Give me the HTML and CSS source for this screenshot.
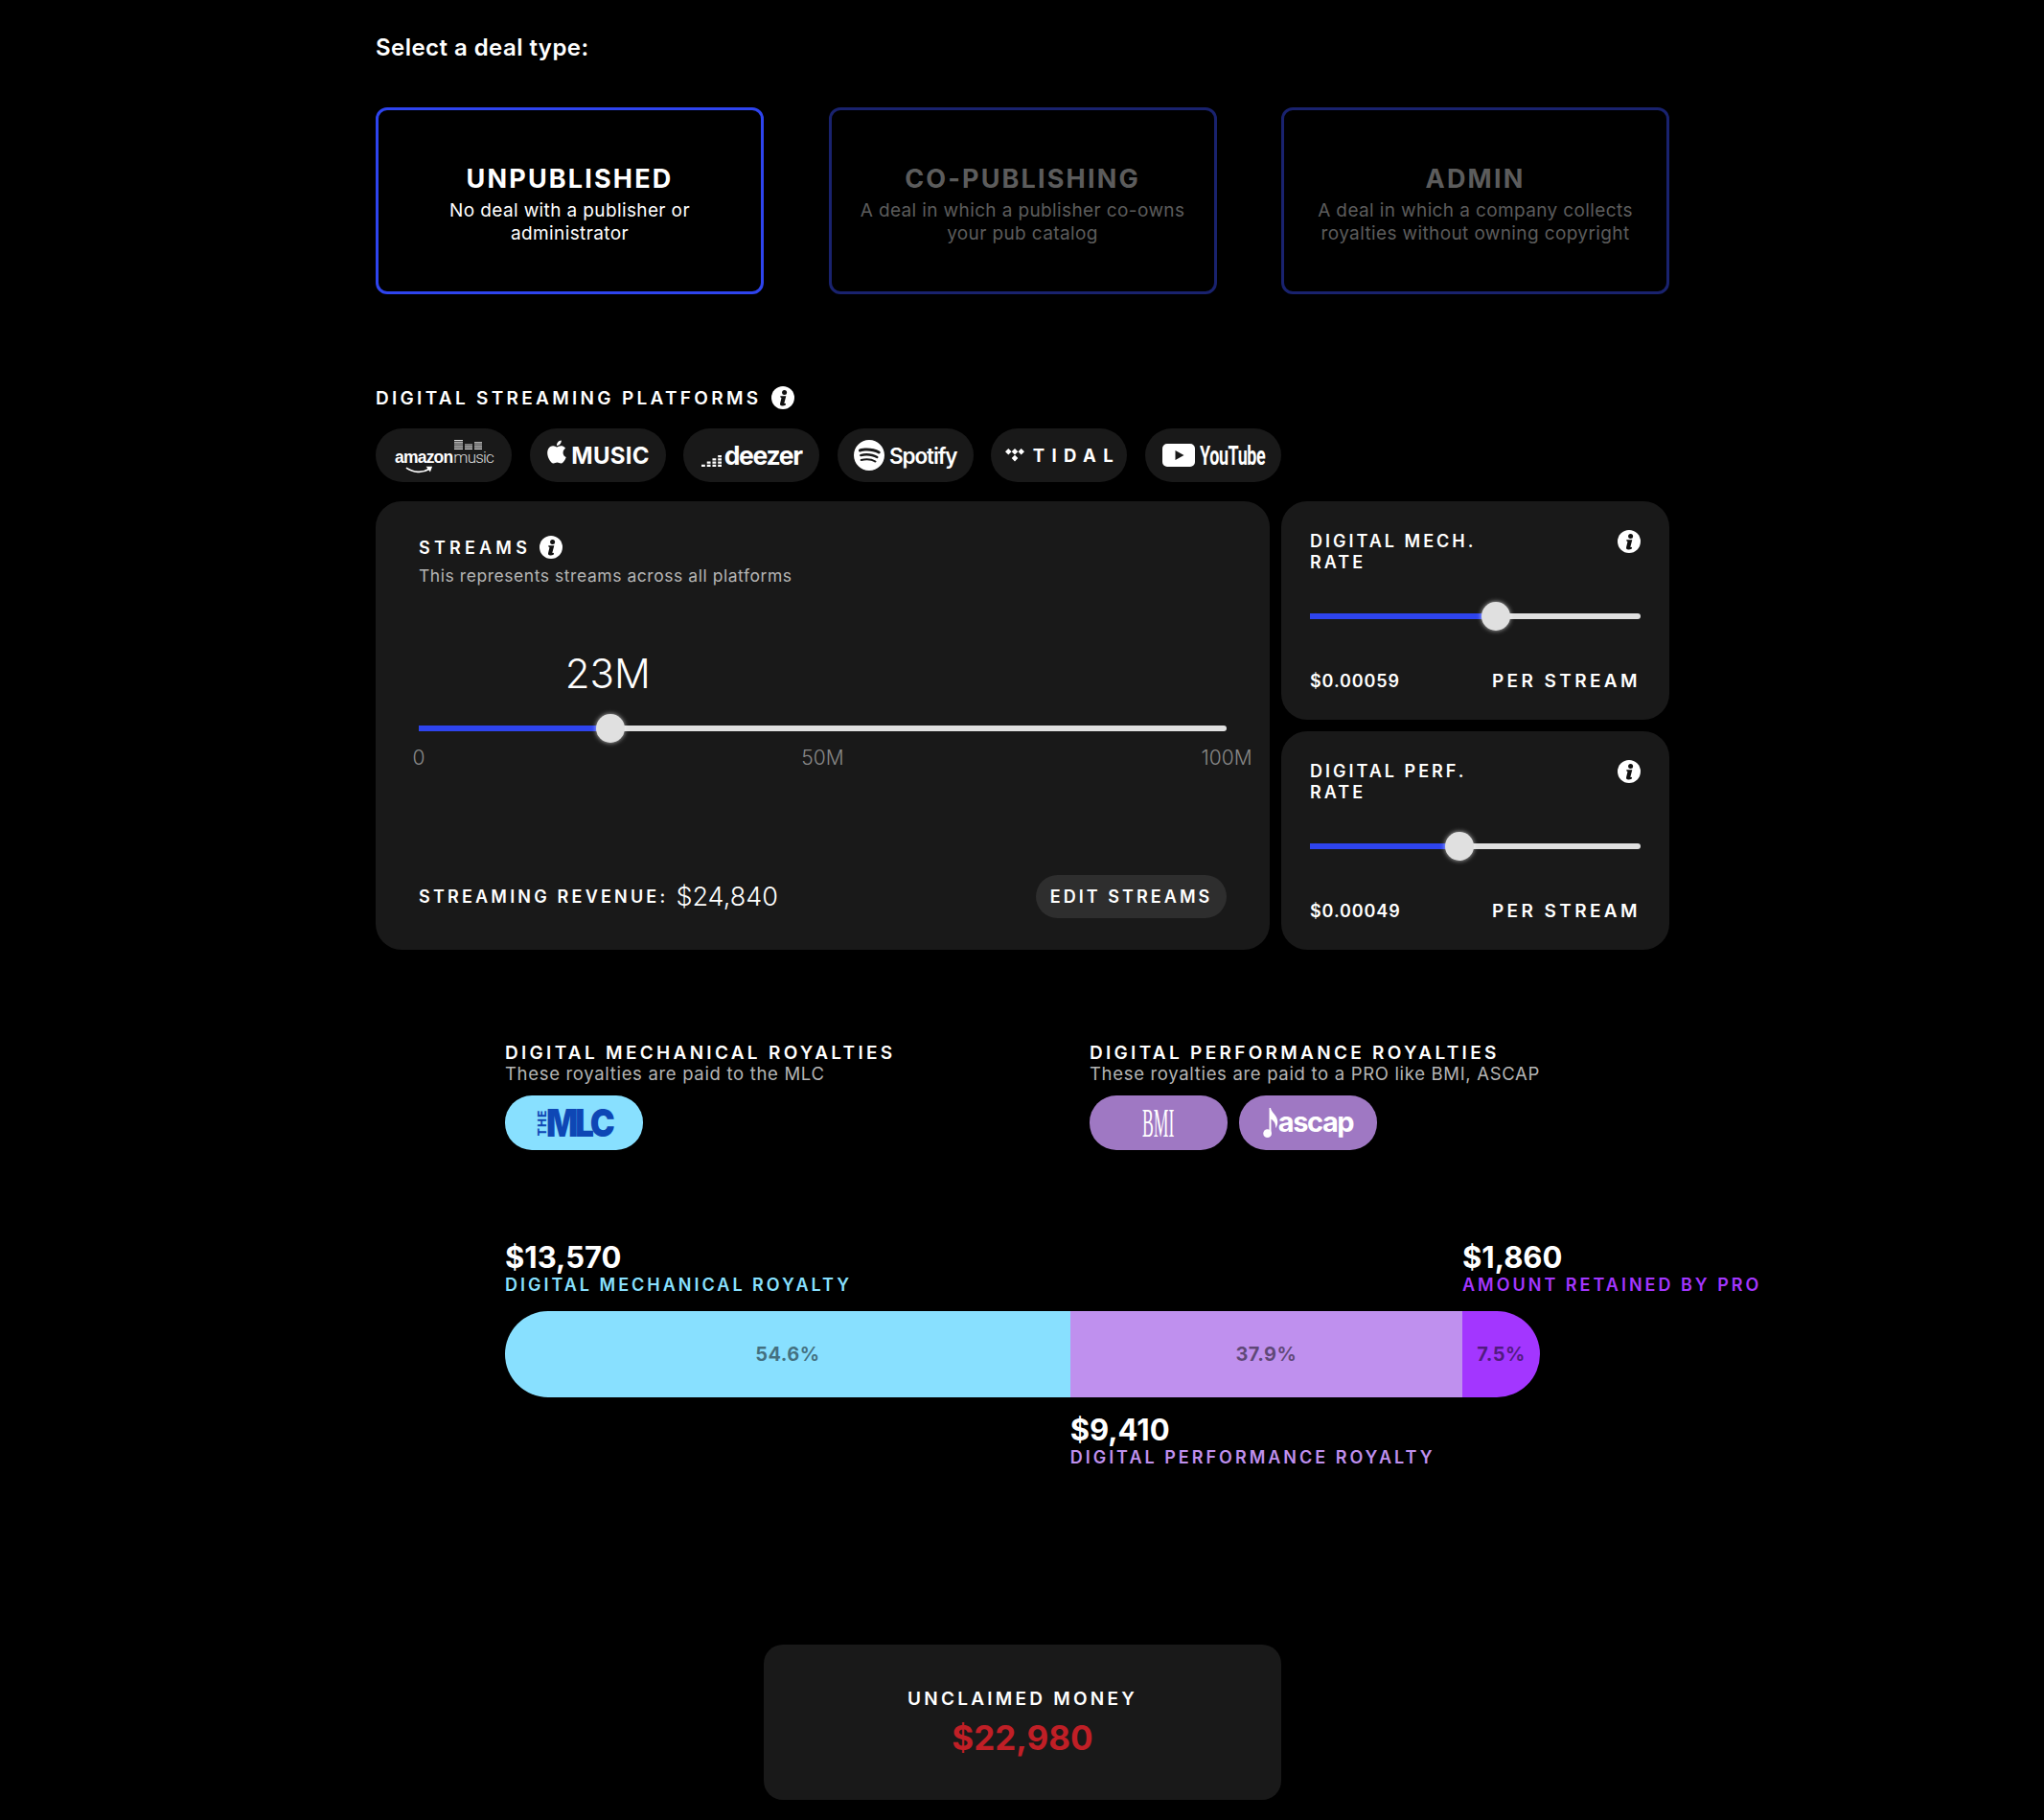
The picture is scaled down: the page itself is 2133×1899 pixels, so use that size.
FILE: index.html
```html
<!DOCTYPE html>
<html>
<head>
    <meta charset="utf-8">
    <title>Royalties</title>
    <link rel="stylesheet" href="styles.css">
</head>
<body>
<svg class="defs">
    <symbol id="info" viewBox="0 0 24 24">
        <circle cx="12" cy="12" r="12" fill="#fff"/>
        <circle cx="13.6" cy="6.4" r="2.5" fill="#111"/>
        <path d="M9.2 10.2h6.1l-1.9 7.3c-.1.5.3.6 1.5.2v1.7c-1 .6-2.3 1-3.5 1-2 0-2.7-1-2.3-2.5l1.3-5.3c.1-.5-.1-.7-.9-.8z" fill="#111"/>
    </symbol>
</svg>

<div class="page">
    <h1 class="heading">Select a deal type:</h1>

    <div class="deals">
        <div class="deal active">
            <div class="deal-name">UNPUBLISHED</div>
            <div class="deal-desc">No deal with a publisher or<br>administrator</div>
        </div>
        <div class="deal">
            <div class="deal-name">CO-PUBLISHING</div>
            <div class="deal-desc">A deal in which a publisher co-owns<br>your pub catalog</div>
        </div>
        <div class="deal">
            <div class="deal-name">ADMIN</div>
            <div class="deal-desc">A deal in which a company collects<br>royalties without owning copyright</div>
        </div>
    </div>

    <div class="section-title">DIGITAL STREAMING PLATFORMS <svg class="info"><use href="#info"/></svg></div>

    <div class="platforms">
        <div class="pill">
            <div class="amazon">
                <svg class="amazon-bars" viewBox="0 0 29 10" fill="#ddd"><path d="M0 0h9v1.2H0zM0 2.2h9v1.2H0zM0 4.4h9v1.2H0zM0 6.6h9v1.2H0zM0 8.8h9V10H0zM11 4.4h8v1.2h-8zM11 6.6h8v1.2h-8zM11 8.8h8V10h-8zM21 2.2h8v1.2h-8zM21 4.4h8v1.2h-8zM21 6.6h8v1.2h-8zM21 8.8h8V10h-8z"/></svg>
                <span class="amazon-word">amazon</span><span class="amazon-music">music</span>
                <svg class="amazon-smile" viewBox="0 0 40 14"><path d="M1 3c10 7 24 8 33 2" fill="none" stroke="#fff" stroke-width="2.4"/><path d="M30 1l9 0-3 8z" fill="#fff"/></svg>
            </div>
        </div>
        <div class="pill">
            <svg class="apple" viewBox="0 0 24 24" fill="#fff"><path d="M12.152 6.896c-.948 0-2.415-1.078-3.96-1.04-2.04.027-3.91 1.183-4.961 3.014-2.117 3.675-.546 9.103 1.519 12.09 1.013 1.454 2.208 3.09 3.792 3.039 1.52-.065 2.09-.987 3.935-.987 1.831 0 2.35.987 3.96.948 1.637-.026 2.676-1.48 3.676-2.948 1.156-1.688 1.636-3.325 1.662-3.415-.039-.013-3.182-1.221-3.22-4.857-.026-3.04 2.48-4.494 2.597-4.559-1.429-2.09-3.623-2.324-4.39-2.376-2-.156-3.675 1.09-4.61 1.09zM15.53 3.83c.843-1.012 1.4-2.427 1.245-3.83-1.207.052-2.662.805-3.532 1.818-.78.896-1.454 2.338-1.273 3.714 1.338.104 2.715-.688 3.559-1.701"/></svg>
            <span class="apple-word">MUSIC</span>
        </div>
        <div class="pill">
            <svg class="deezer-bars" viewBox="0 0 22 12" preserveAspectRatio="none" fill="#fff"><path d="M0 10h4v2H0zM6 10h4v2H6zM12 10h4v2h-4zM18 10h4v2h-4zM6 7h4v2H6zM12 7h4v2h-4zM18 7h4v2h-4zM12 4h4v2h-4zM18 4h4v2h-4zM18 1h4v2h-4z"/></svg>
            <span class="deezer-word">deezer</span>
        </div>
        <div class="pill">
            <svg class="spotify" viewBox="0 0 24 24" fill="#fff"><path d="M12 0C5.4 0 0 5.4 0 12s5.4 12 12 12 12-5.4 12-12S18.66 0 12 0zm5.521 17.34c-.24.359-.66.48-1.021.24-2.82-1.74-6.36-2.101-10.561-1.141-.418.122-.779-.179-.899-.539-.12-.421.18-.78.54-.9 4.56-1.021 8.52-.6 11.64 1.32.42.18.479.659.301 1.02zm1.44-3.3c-.301.42-.841.6-1.262.3-3.239-1.98-8.159-2.58-11.939-1.38-.479.12-1.02-.12-1.14-.6-.12-.48.12-1.021.6-1.141C9.6 9.9 15 10.561 18.72 12.84c.361.181.54.78.241 1.2zm.12-3.36C15.24 8.4 8.82 8.16 5.16 9.301c-.6.179-1.2-.181-1.38-.721-.18-.601.18-1.2.72-1.381 4.26-1.26 11.28-1.02 15.721 1.621.539.3.719 1.02.419 1.56-.299.421-1.02.599-1.559.3z"/></svg>
            <span class="spotify-word">Spotify</span>
        </div>
        <div class="pill">
            <svg class="tidal" viewBox="0 0 20 14" fill="#fff"><path d="M3.3 0l3.3 3.3-3.3 3.3L0 3.3zM10 0l3.3 3.3L10 6.6 6.7 3.3zM16.7 0L20 3.3l-3.3 3.3-3.3-3.3zM10 6.8l3.3 3.3-3.3 3.3-3.3-3.3z"/></svg>
            <span class="tidal-word">TIDAL</span>
        </div>
        <div class="pill">
            <svg class="youtube" viewBox="0 0 34 24"><path fill="#fff" fill-rule="evenodd" d="M5 0h24a5 5 0 0 1 5 5v14a5 5 0 0 1-5 5H5a5 5 0 0 1-5-5V5a5 5 0 0 1 5-5zM13.5 7v10l9-5z"/></svg>
            <span class="youtube-word">YouTube</span>
        </div>
    </div>

    <div class="panels">
        <div class="panel streams">
            <div class="panel-title">STREAMS <svg class="info"><use href="#info"/></svg></div>
            <div class="panel-sub">This represents streams across all platforms</div>
            <div class="streams-slider">
                <div class="slider">
                    <div class="fill" style="width: 23.7%"></div>
                    <div class="thumb" style="left: 23.7%"></div>
                    <div class="slider-value" style="left: 23.4%">23M</div>
                </div>
                <div class="ticks">
                    <span class="tick">0</span>
                    <span class="tick">50M</span>
                    <span class="tick">100M</span>
                </div>
            </div>
            <div class="revenue-row">
                <div class="revenue"><span class="revenue-label">STREAMING REVENUE:</span> <span class="revenue-value">$24,840</span></div>
                <div class="edit-btn">EDIT STREAMS</div>
            </div>
        </div>
        <div class="rates">
            <div class="panel rate">
                <div class="rate-head">
                    <div class="rate-title">DIGITAL MECH.<br>RATE</div>
                    <svg class="info"><use href="#info"/></svg>
                </div>
                <div class="slider">
                    <div class="fill" style="width: 56.1%"></div>
                    <div class="thumb" style="left: 56.1%"></div>
                </div>
                <div class="rate-foot"><span class="rate-value">$0.00059</span><span class="rate-unit">PER STREAM</span></div>
            </div>
            <div class="panel rate">
                <div class="rate-head">
                    <div class="rate-title">DIGITAL PERF.<br>RATE</div>
                    <svg class="info"><use href="#info"/></svg>
                </div>
                <div class="slider">
                    <div class="fill" style="width: 45.1%"></div>
                    <div class="thumb" style="left: 45.1%"></div>
                </div>
                <div class="rate-foot"><span class="rate-value">$0.00049</span><span class="rate-unit">PER STREAM</span></div>
            </div>
        </div>
    </div>

    <div class="royalties">
        <div class="royalty">
            <div class="royalty-title">DIGITAL MECHANICAL ROYALTIES</div>
            <div class="royalty-sub">These royalties are paid to the MLC</div>
            <div class="royalty-pills">
                <div class="pill pill-blue"><span class="mlc-the">THE</span><span class="mlc-word">MLC</span></div>
            </div>
        </div>
        <div class="royalty">
            <div class="royalty-title">DIGITAL PERFORMANCE ROYALTIES</div>
            <div class="royalty-sub">These royalties are paid to a PRO like BMI, ASCAP</div>
            <div class="royalty-pills">
                <div class="pill pill-purple"><span class="bmi-word">BMI</span></div>
                <div class="pill pill-purple">
                    <svg class="ascap-note" viewBox="0 0 16 32"><ellipse cx="4.5" cy="27.5" rx="4.500" ry="4.500" fill="#fff"/><path fill="#fff" d="M6.500 0h1.500c.5 5 7.500 8 7.500 15 0 3-1 5-2 7 0-5-1.500-8-5-10v16H6.500z"/></svg>
                    <span class="ascap-word">ascap</span>
                </div>
            </div>
        </div>
    </div>

    <div class="chart">
        <div class="legend">
            <div class="legend-item" style="width: 92.5%">
                <div class="legend-value">$13,570</div>
                <div class="legend-label c-blue">DIGITAL MECHANICAL ROYALTY</div>
            </div>
            <div class="legend-item">
                <div class="legend-value">$1,860</div>
                <div class="legend-label c-violet">AMOUNT RETAINED BY PRO</div>
            </div>
        </div>
        <div class="bar">
            <div class="seg seg-blue" style="width: 54.6%">54.6%</div>
            <div class="seg seg-lilac" style="width: 37.9%">37.9%</div>
            <div class="seg seg-violet" style="width: 7.5%">7.5%</div>
        </div>
        <div class="legend legend-below">
            <div class="legend-item" style="margin-left: 54.6%">
                <div class="legend-value">$9,410</div>
                <div class="legend-label c-lilac">DIGITAL PERFORMANCE ROYALTY</div>
            </div>
        </div>
    </div>

    <div class="unclaimed">
        <div class="unclaimed-label">UNCLAIMED MONEY</div>
        <div class="unclaimed-value">$22,980</div>
    </div>
</div>
</body>
</html>
```

FILE: styles.css
```css
html, body { margin: 0; padding: 0; background: #000; color: #fff; font-family: Inter, "Noto Sans", sans-serif; }
.defs { display: none; }
.page { width: 1350px; margin-left: 392px; padding-bottom: 21px; }
.info { display: block; width: 24px; height: 24px; flex: none; }

.heading { margin: 0; padding-top: 32px; font-size: 24px; line-height: 36px; font-weight: 600; letter-spacing: 0.45px; }

/* deal cards */
.deals { display: grid; grid-template-columns: repeat(3, 405px); justify-content: space-between; margin-top: 44px; }
.deal { box-sizing: border-box; height: 195px; padding-top: 6px; border: 3px solid #19226e; border-radius: 12px; display: flex; flex-direction: column; justify-content: center; align-items: center; text-align: center; color: #5c5c5c; }
.deal.active { border-color: #2e44ee; color: #fff; }
.deal-name { font-size: 27px; line-height: 36px; font-weight: 700; letter-spacing: 0.08em; }
.deal-desc { font-size: 19px; line-height: 24.5px; letter-spacing: 0.02em; margin-top: 3px; }

/* platforms */
.section-title { display: flex; align-items: center; gap: 11px; margin-top: 96px; height: 24px; font-size: 19px; font-weight: 600; letter-spacing: 3.3px; white-space: nowrap; }
.platforms { display: grid; grid-template-columns: repeat(6, 142px); justify-content: space-between; width: 945px; margin-top: 20px; }
.pill { height: 56px; border-radius: 28px; background: #191919; display: flex; align-items: center; justify-content: center; }

.amazon { position: relative; display: flex; align-items: baseline; width: 102px; margin-top: 5px; }
.amazon-word { font-family: "Liberation Sans", sans-serif; font-size: 17.5px; font-weight: 700; letter-spacing: -0.8px; }
.amazon-music { font-family: Roboto, sans-serif; font-size: 17px; font-weight: 300; letter-spacing: -0.8px; color: #ddd; margin-left: 1px; }
.amazon-bars { position: absolute; left: 62px; top: -8px; width: 29px; height: 10px; }
.amazon-smile { position: absolute; left: 10px; top: 19px; width: 31px; height: 10px; }
.apple { width: 24px; height: 27px; margin: -7px 3px 0 0; }
.apple-word { font-size: 24px; font-weight: 700; letter-spacing: 0.3px; }
.deezer-bars { width: 21px; height: 13px; margin: 10px 3px 0 0; }
.deezer-word { font-size: 26.5px; font-weight: 700; letter-spacing: -0.05em; }
.spotify { width: 32px; height: 32px; margin-right: 5px; }
.spotify-word { font-size: 22.5px; font-weight: 600; letter-spacing: -0.05em; }
.tidal { width: 20px; height: 14px; margin-right: 9px; }
.tidal-word { font-size: 18.5px; font-weight: 700; letter-spacing: 0.4em; margin-right: -7px; }
.youtube { width: 34px; height: 24px; margin-right: 5px; }
.youtube-word { display: block; width: 67px; font-family: Roboto, sans-serif; font-size: 28px; font-weight: 700; letter-spacing: -0.02em; white-space: nowrap; transform: scaleX(0.64); transform-origin: left; }

/* panels */
.panels { display: flex; justify-content: space-between; margin-top: 20px; }
.panel { box-sizing: border-box; background: #191919; border-radius: 27px; }
.streams { width: 933px; height: 468px; padding: 36px 45px 33px; display: flex; flex-direction: column; }
.panel-title { display: flex; align-items: center; gap: 9px; height: 24px; font-size: 18px; font-weight: 600; letter-spacing: 4.2px; }
.panel-sub { margin-top: 6px; font-size: 17.5px; line-height: 24px; color: #b5b5b5; letter-spacing: 0.55px; }
.streams-slider { margin-top: 144px; }

.slider { position: relative; height: 6px; background: #e0e0e0; border-radius: 0 3px 3px 0; }
.fill { height: 100%; background: #2e44ee; }
.thumb { position: absolute; top: 50%; width: 30px; height: 30px; margin: -15px 0 0 -15px; border-radius: 50%; background: #e0e0e0; box-shadow: 0 0 5px rgba(255, 255, 255, 0.7); }
.slider-value { position: absolute; bottom: 35px; transform: translateX(-50%); font-size: 42px; line-height: 50px; font-weight: 300; white-space: nowrap; }
.ticks { display: flex; justify-content: space-between; margin-top: 15px; }
.tick { width: 0; display: flex; justify-content: center; font-size: 21px; line-height: 26px; font-weight: 300; color: #888; white-space: nowrap; }

.revenue-row { margin-top: auto; display: flex; justify-content: space-between; align-items: center; }
.revenue { display: flex; align-items: center; gap: 8px; }
.revenue-label { font-size: 18px; font-weight: 600; letter-spacing: 3.2px; }
.revenue-value { font-size: 27px; font-weight: 300; }
.edit-btn { box-sizing: border-box; width: 199px; height: 45px; border-radius: 23px; background: #2e2e2e; display: flex; align-items: center; justify-content: center; font-size: 18px; font-weight: 600; letter-spacing: 0.17em; }

.rates { width: 405px; display: flex; flex-direction: column; gap: 12px; }
.rate { height: 228px; padding: 30px 30px 0; }
.rate-head { display: flex; justify-content: space-between; height: 44px; }
.rate-title { padding-top: 1px; font-size: 18px; line-height: 22px; font-weight: 600; letter-spacing: 3px; }
.rate .slider { margin-top: 43px; }
.rate-foot { display: flex; justify-content: space-between; align-items: center; margin-top: 51px; height: 26px; }
.rate-value { font-size: 18px; font-weight: 600; letter-spacing: 0.05em; }
.rate-unit { font-size: 19px; font-weight: 600; letter-spacing: 3.4px; }

/* royalties */
.royalties { display: flex; margin-top: 96px; padding-left: 135px; }
.royalty { flex: none; width: 610px; }
.royalty-title { padding-top: 1px; font-size: 19px; line-height: 21px; font-weight: 600; letter-spacing: 3.3px; white-space: nowrap; }
.royalty-sub { font-size: 18.5px; line-height: 22px; color: #b5b5b5; letter-spacing: 0.68px; white-space: nowrap; }
.royalty-pills { display: flex; gap: 12px; margin-top: 12px; }
.royalty-pills .pill { width: 144px; height: 57px; }
.pill-blue { background: #88e0ff; color: #0e47b5; }
.pill-purple { background: #9f78c3; }
.mlc-the { display: flex; justify-content: center; width: 10px; font-size: 12px; font-weight: 800; letter-spacing: 1px; transform: rotate(-90deg); white-space: nowrap; }
.mlc-word { display: block; width: 69px; font-size: 40px; line-height: 44px; font-weight: 900; letter-spacing: -0.09em; white-space: nowrap; transform: scaleX(0.87); transform-origin: left; }
.bmi-word { font-family: "Liberation Serif", serif; font-size: 42px; line-height: 44px; transform: scaleX(0.42); }
.ascap-note { width: 16px; height: 31px; margin-right: 0; }
.ascap-word { font-size: 29px; font-weight: 700; letter-spacing: -0.05em; margin-top: -3px; }

/* chart */
.chart { width: 1080px; margin: 94px 0 0 135px; }
.legend { display: flex; }
.legend-below { margin-top: 16px; }
.legend-item { flex: none; }
.legend-value { font-size: 31px; line-height: 36px; font-weight: 700; white-space: nowrap; }
.legend-label { margin-top: 1px; font-size: 18px; line-height: 20px; font-weight: 600; letter-spacing: 3px; white-space: nowrap; }
.c-blue { color: #88e0ff; }
.c-lilac { color: #bf90ee; }
.c-violet { color: #a336ff; }
.bar { display: flex; height: 90px; margin-top: 17px; border-radius: 45px; overflow: hidden; }
.seg { display: flex; align-items: center; justify-content: center; font-size: 20px; font-weight: 700; color: rgba(0, 0, 0, 0.5); letter-spacing: 0.02em; }
.seg-blue { background: #88e0ff; }
.seg-lilac { background: #bf90ee; }
.seg-violet { background: #a336ff; }

/* unclaimed */
.unclaimed { box-sizing: border-box; width: 540px; height: 162px; margin: 185px auto 0; border-radius: 20px; background: #191919; display: flex; flex-direction: column; align-items: center; padding-top: 44px; }
.unclaimed-label { font-size: 19px; line-height: 26px; font-weight: 600; letter-spacing: 0.17em; }
.unclaimed-value { margin-top: 2px; font-size: 35px; line-height: 50px; font-weight: 700; color: #c01f26; }
```
